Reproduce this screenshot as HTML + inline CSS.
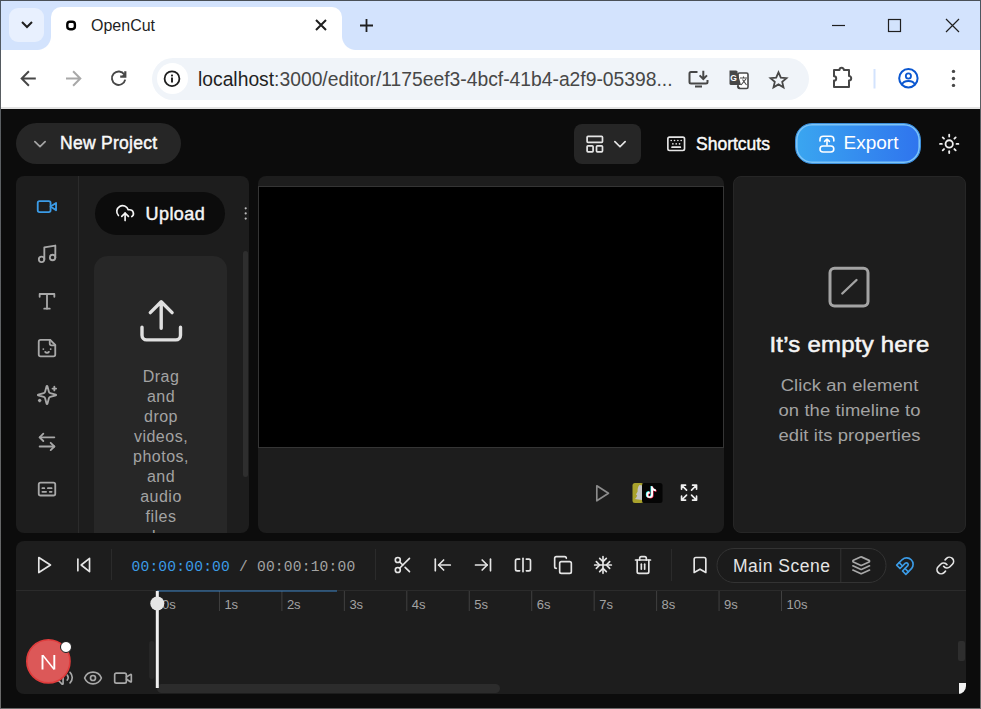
<!DOCTYPE html>
<html><head><meta charset="utf-8">
<style>
*{box-sizing:border-box;margin:0;padding:0}
html,body{width:981px;height:709px;overflow:hidden;background:#0c0c0c;font-family:"Liberation Sans",sans-serif}
.abs{position:absolute}
#win{position:absolute;left:0;top:0;width:981px;height:709px;}
#tabstrip{position:absolute;left:0;top:0;width:981px;height:50px;background:#d3e3fd}
#toolbar{position:absolute;left:0;top:50px;width:981px;height:58px;background:#fff}
#tbline{position:absolute;left:0;top:107px;width:981px;height:2px;background:#e3e3e3}
#bl{position:absolute;left:0;top:0;width:1px;height:709px;background:linear-gradient(#4b5560,#5a5e62 100px,#6a6a6a)}
#bt{position:absolute;left:0;top:0;width:981px;height:1px;background:#4a5057}
#br{position:absolute;left:980px;top:0;width:1px;height:709px;background:linear-gradient(#4b5560,#5a5e62 100px,#6a6a6a)}
#app{position:absolute;left:1px;top:109px;width:979px;height:600px;background:#0c0c0c;overflow:hidden}
svg{position:absolute;overflow:visible}
.panel{position:absolute;background:#1d1d1d;border-radius:8px}
</style></head><body>
<div id="win">
  <div id="tabstrip"></div>
  <!-- dropdown -->
  <div class="abs" style="left:9px;top:8px;width:35px;height:34px;border-radius:9px;background:#e8f0fe"></div>
  <svg style="left:0;top:0" width="981" height="50">
    <path d="M22 22 L27 27 L32 22" fill="none" stroke="#1f1f1f" stroke-width="2"/>
  </svg>
  <!-- tab -->
  <div class="abs" style="left:51px;top:7px;width:291px;height:45px;background:#fff;border-radius:10px 10px 0 0"></div>
  <div class="abs" style="left:37px;top:36px;width:14px;height:14px;background:radial-gradient(circle at 0 0,transparent 13.5px,#fff 14.5px)"></div>
  <div class="abs" style="left:342px;top:36px;width:14px;height:14px;background:radial-gradient(circle at 14px 0,transparent 13.5px,#fff 14.5px)"></div>
  <svg style="left:0;top:0" width="981" height="50">
    <rect x="67.3" y="21.8" width="7.6" height="7.4" rx="2.6" fill="none" stroke="#000" stroke-width="2.4"/>
    <path d="M316 20 L326 30 M326 20 L316 30" stroke="#1f1f1f" stroke-width="2"/>
    <path d="M360 25.5 H373 M366.5 19 V32" stroke="#1f1f1f" stroke-width="1.8"/>
    <path d="M832 25.5 H845" stroke="#1f1f1f" stroke-width="1.2"/>
    <rect x="888.5" y="19.5" width="12" height="12" fill="none" stroke="#1f1f1f" stroke-width="1.2"/>
    <path d="M946 19 L959 32 M959 19 L946 32" stroke="#1f1f1f" stroke-width="1.2"/>
  </svg>
  <div class="abs t" style="left:91px;top:16.5px;font-size:16px;letter-spacing:0px;color:#1f1f1f;line-height:18px">OpenCut</div>
  <div id="toolbar"></div>
  <div id="tbline"></div>
  <!-- address bar -->
  <div class="abs" style="left:152px;top:58px;width:657px;height:42px;border-radius:21px;background:#f0f4f9"></div>
  <div class="abs" style="left:157px;top:63px;width:31px;height:31px;border-radius:50%;background:#fff"></div>
  <div class="abs t" style="left:198px;top:68.5px;font-size:19.3px;color:#1f1f1f;line-height:22px;white-space:nowrap">localhost<span style="color:#474747">:3000/editor/1175eef3-4bcf-41b4-a2f9-05398...</span></div>
  <svg style="left:0;top:0" width="981" height="109">
    <!-- back -->
    <path d="M35.8 78.5 H22 M28.9 71.3 L21.7 78.5 L28.9 85.7" fill="none" stroke="#474747" stroke-width="2"/>
    <path d="M66 78.5 H80 M73.1 71.3 L80.3 78.5 L73.1 85.7" fill="none" stroke="#a8a8a8" stroke-width="2"/>
    <path d="M125.2 79.6 A6.7 6.7 0 1 1 124.3 74.6" fill="none" stroke="#474747" stroke-width="1.9"/>
    <path d="M120.2 76.6 H125.3 V71.2" fill="none" stroke="#474747" stroke-width="2.2" stroke-linejoin="miter"/>
    <path d="M121.5 76.6 L125.3 72.8 V76.6 Z" fill="#474747"/>
    <circle cx="172" cy="78.7" r="7.4" fill="none" stroke="#1f1f1f" stroke-width="1.8"/>
    <path d="M172 77.4 V82.6" stroke="#1f1f1f" stroke-width="1.9"/>
    <rect x="171.05" y="74.6" width="1.9" height="1.8" fill="#1f1f1f"/>
  </svg>
  <div id="bl"></div><div id="bt"></div><div id="br"></div>
  
  <svg style="left:0;top:0" width="981" height="109">
    <!-- install -->
    <path d="M697.5 72 H691 a1.5 1.5 0 0 0 -1.5 1.5 V82 a1.5 1.5 0 0 0 1.5 1.5 H706 a1.5 1.5 0 0 0 1.5 -1.5 V80" fill="none" stroke="#474747" stroke-width="2"/>
    <rect x="695" y="85.5" width="7" height="2" fill="#474747"/>
    <path d="M703.3 70.8 V79 M699.6 75.4 L703.3 79 L707 75.4" fill="none" stroke="#474747" stroke-width="2"/>
    <!-- translate -->
    <rect x="738" y="73" width="10" height="15.5" rx="1.5" fill="#fff" stroke="#474747" stroke-width="1.6"/>
    <path d="M729.5 70.5 H736 a1.5 1.5 0 0 1 1.2 .8 L741 85 H731 a1.5 1.5 0 0 1 -1.5 -1.5 Z" fill="#474747"/>
    <path d="M737.5 86 L739.5 88.5" stroke="#474747" stroke-width="2"/>
    <text x="733.5" y="81" font-family="Liberation Sans" font-weight="bold" font-size="8.5" fill="#fff" text-anchor="middle">G</text>
    <path d="M740 78 H747 M743.5 76.5 V78 M741 85 L746 79 M742.5 79.5 L746.5 85" stroke="#474747" stroke-width="1.1" fill="none"/>
    <!-- star -->
    <path d="M778.5 72.3 L780.8 77.6 L786.5 78.1 L782.2 81.9 L783.5 87.3 L778.5 84.4 L773.5 87.3 L774.8 81.9 L770.5 78.1 L776.2 77.6 Z" fill="none" stroke="#474747" stroke-width="1.8" stroke-linejoin="miter"/>
    <!-- extensions -->
    <path d="M834 70 H839.5 a2.2 2.2 0 0 1 4.4 0 H849 V76 a2.2 2.2 0 0 1 0 4.4 V87 H834 V80.6 a2.2 2.2 0 0 0 0 -4.4 Z" fill="none" stroke="#474747" stroke-width="2" stroke-linejoin="round"/>
    <rect x="873.5" y="69" width="2" height="19.5" fill="#d3e3fd"/>
    <!-- profile -->
    <circle cx="908.4" cy="78.3" r="9.2" fill="none" stroke="#0b57d0" stroke-width="2"/>
    <circle cx="908.4" cy="76" r="2.6" fill="none" stroke="#0b57d0" stroke-width="1.8"/>
    <path d="M901.8 84.8 C903 81.8 905.5 81 908.4 81 C911.3 81 913.8 81.8 915 84.8" fill="none" stroke="#0b57d0" stroke-width="1.8"/>
    <circle cx="953.5" cy="71.4" r="1.7" fill="#474747"/>
    <circle cx="953.5" cy="78.5" r="1.7" fill="#474747"/>
    <circle cx="953.5" cy="85.4" r="1.7" fill="#474747"/>
  </svg>
<div id="app"></div>
  <!-- ===== APP HEADER ===== -->
  <div class="abs" style="left:16px;top:123px;width:165px;height:41px;border-radius:20.5px;background:#262626"></div>
  <svg style="left:0;top:0" width="981" height="709">
    <g transform="translate(29.75,133.85) scale(0.8542)" fill="none" stroke="#a3a3a3" stroke-width="2" stroke-linecap="round" stroke-linejoin="round"><path d="m6 9 6 6 6-6"/></g>
    
  </svg>
  <div class="abs t" style="left:60px;top:132.5px;font-size:17.5px;font-weight:normal;-webkit-text-stroke:0.45px #fafafa;letter-spacing:0.27px;color:#fafafa;line-height:20px;white-space:nowrap">New Project</div>
  <div class="abs" style="left:574px;top:124px;width:67px;height:40px;border-radius:8px;background:#262626"></div>
  <svg style="left:0;top:0" width="981" height="709">
    <g transform="translate(584.55,133.85) scale(0.8542)" fill="none" stroke="#e5e5e5" stroke-width="2" stroke-linecap="round" stroke-linejoin="round"><rect width="18" height="7" x="3" y="3" rx="1"/><rect width="7" height="7" x="3" y="14" rx="1"/><rect width="7" height="7" x="14" y="14" rx="1"/></g>
    <g transform="translate(609.75,133.95) scale(0.8542)" fill="none" stroke="#e5e5e5" stroke-width="2" stroke-linecap="round" stroke-linejoin="round"><path d="m6 9 6 6 6-6"/></g>
    <g transform="translate(666.20,133.80) scale(0.8333)" fill="none" stroke="#e5e5e5" stroke-width="2" stroke-linecap="round" stroke-linejoin="round"><path d="M10 8h.01"/><path d="M12 12h.01"/><path d="M14 8h.01"/><path d="M16 12h.01"/><path d="M18 8h.01"/><path d="M6 8h.01"/><path d="M7 16h10"/><path d="M8 12h.01"/><rect width="20" height="16" x="2" y="4" rx="2"/></g>
    <g transform="translate(938.20,132.90) scale(0.9167)" fill="none" stroke="#f0f0f0" stroke-width="2" stroke-linecap="round" stroke-linejoin="round"><circle cx="12" cy="12" r="4"/><path d="M12 2v2"/><path d="M12 20v2"/><path d="m4.93 4.93 1.41 1.41"/><path d="m17.66 17.66 1.41 1.41"/><path d="M2 12h2"/><path d="M20 12h2"/><path d="m6.34 17.66-1.41 1.41"/><path d="m19.07 4.93-1.41 1.41"/></g>
    </svg>
  <div class="abs t" style="left:696px;top:133.5px;font-size:17.5px;font-weight:normal;-webkit-text-stroke:0.45px #fafafa;letter-spacing:0px;color:#fafafa;line-height:20px;white-space:nowrap">Shortcuts</div>
  <div class="abs" style="left:795px;top:123px;width:126px;height:41px;border-radius:17px;background:linear-gradient(90deg,#3aa6f0,#2f74ee);border:1px solid #3d8ed8;box-shadow:inset 0 0 0 1.6px #7cc4f7"></div>
  <svg style="left:0;top:0" width="981" height="709">
    <path d="M820 141 V139.5 a3.2 3.2 0 0 1 3.2 -3.2 H830.6 a3.2 3.2 0 0 1 3.2 3.2 V141" fill="none" stroke="#fff" stroke-width="1.6" stroke-linecap="round"/>
    <path d="M827 145 V139 M824.6 141.4 L827 139 L829.4 141.4" fill="none" stroke="#fff" stroke-width="1.6" stroke-linecap="round" stroke-linejoin="round"/>
    <rect x="820" y="146" width="13.8" height="6" rx="3" fill="none" stroke="#fff" stroke-width="1.6"/>
  </svg>
  <div class="abs t" style="left:843.5px;top:132.5px;font-size:19px;letter-spacing:0px;color:#fff;line-height:20px;white-space:nowrap">Export</div>

  <!-- ===== PANELS ===== -->
  <div class="panel" style="left:16px;top:176px;width:233px;height:357px;overflow:hidden">
    <div class="abs" style="left:62px;top:0;width:1px;height:357px;background:#2b2b2b"></div>
    <div class="abs" style="left:79px;top:16px;width:130px;height:43px;border-radius:21.5px;background:#0c0c0c"></div>
    <div class="abs" style="left:78px;top:80px;width:133px;height:300px;border-radius:14px;background:#272727"></div>
    <div class="abs" style="left:227px;top:75px;width:5px;height:226px;border-radius:3px;background:#2e2e2e"></div>
  </div>
  <div class="panel" style="left:258px;top:176px;width:466px;height:357px;overflow:hidden">
    <div class="abs" style="left:0;top:10px;width:466px;height:262px;background:#000;border:1px solid #353535"></div>
  </div>
  <div class="panel" style="left:733px;top:176px;width:233px;height:357px;border:1px solid #262626"></div>

  <!-- rail icons -->
  <svg style="left:0;top:0" width="981" height="709">
    <g transform="translate(35.90,195.60) scale(0.9167)" fill="none" stroke="#3b9be6" stroke-width="2" stroke-linecap="round" stroke-linejoin="round"><path d="m22 8-6 4 6 4V8Z"/><rect width="14" height="12" x="2" y="6" rx="2" ry="2"/></g>
    <g transform="translate(36.07,242.80) scale(0.9167)" fill="none" stroke="#a8a8a8" stroke-width="2" stroke-linecap="round" stroke-linejoin="round"><path d="M9 18V5l12-2v13"/><circle cx="6" cy="18" r="3"/><circle cx="18" cy="16" r="3"/></g>
    <g transform="translate(36.00,290.35) scale(0.9167)" fill="none" stroke="#a8a8a8" stroke-width="2" stroke-linecap="round" stroke-linejoin="round"><polyline points="4 7 4 4 20 4 20 7"/><line x1="9" x2="15" y1="20" y2="20"/><line x1="12" x2="12" y1="4" y2="20"/></g>
    <g transform="translate(36.00,337.20) scale(0.9167)" fill="none" stroke="#a8a8a8" stroke-width="2" stroke-linecap="round" stroke-linejoin="round"><path d="M15.5 3H5a2 2 0 0 0-2 2v14c0 1.1.9 2 2 2h14a2 2 0 0 0 2-2V8.5L15.5 3Z"/><path d="M15 3v4a2 2 0 0 0 2 2h4"/><path d="M8 13h.01"/><path d="M16 13h.01"/><path d="M10 16s.8 1 2 1c1.3 0 2-1 2-1"/></g>
    <g transform="translate(36.00,384.00) scale(0.9167)" fill="none" stroke="#a8a8a8" stroke-width="2" stroke-linecap="round" stroke-linejoin="round"><path d="M9.937 15.5A2 2 0 0 0 8.5 14.063l-6.135-1.582a.5.5 0 0 1 0-.962L8.5 9.936A2 2 0 0 0 9.937 8.5l1.582-6.135a.5.5 0 0 1 .963 0L14.063 8.5A2 2 0 0 0 15.5 9.937l6.135 1.581a.5.5 0 0 1 0 .964L15.5 14.063a2 2 0 0 0-1.437 1.437l-1.582 6.135a.5.5 0 0 1-.963 0z"/><path d="M20 3v4"/><path d="M22 5h-4"/><path d="M4 17v2"/><path d="M5 18H3"/></g>
    <g transform="translate(36.00,430.90) scale(0.9167)" fill="none" stroke="#a8a8a8" stroke-width="2" stroke-linecap="round" stroke-linejoin="round"><path d="M8 3 4 7l4 4"/><path d="M4 7h16"/><path d="m16 21 4-4-4-4"/><path d="M20 17H4"/></g>
    <g transform="translate(36.00,478.10) scale(0.9167)" fill="none" stroke="#a8a8a8" stroke-width="2" stroke-linecap="round" stroke-linejoin="round"><rect width="18" height="14" x="3" y="5" rx="2" ry="2"/><path d="M7 15h4M15 15h2M7 11h2M13 11h4"/></g>
    <!-- upload button -->
    <g transform="translate(115.1,203.1) scale(0.8333)" fill="none" stroke="#f5f5f5" stroke-width="2" stroke-linecap="round" stroke-linejoin="round"><path d="M4 14.899A7 7 0 1 1 15.71 8h1.79a4.5 4.5 0 0 1 2.5 8.242"/><path d="M12 12v9"/><path d="m16 16-4-4-4 4"/></g>
    <circle cx="245.7" cy="208.3" r="1.1" fill="#bdbdbd"/>
    <circle cx="245.7" cy="213.4" r="1.1" fill="#bdbdbd"/>
    <circle cx="245.7" cy="218.6" r="1.1" fill="#bdbdbd"/>
    <g fill="none" stroke="#e0e0e0" stroke-width="3.4" stroke-linecap="round" stroke-linejoin="round">
      <path d="M161.2 328.3 V302 M150.3 312.6 L161.2 301.8 L172.1 312.6"/>
      <path d="M142 327.3 V335.3 a4.6 4.6 0 0 0 4.6 4.6 H175.9 a4.6 4.6 0 0 0 4.6 -4.6 V327.3"/>
    </g>
  </svg>
  <div class="abs t" style="left:145.5px;top:203.5px;font-size:18px;font-weight:normal;-webkit-text-stroke:0.45px #f5f5f5;letter-spacing:0.44px;color:#f5f5f5;line-height:21px;white-space:nowrap">Upload</div>
  <div class="abs" style="left:95px;top:367px;width:131px;height:166px;overflow:hidden">
    <div class="t" style="width:131px;text-align:center;font-size:16px;line-height:20px;color:#a3a3a3;padding-left:1px;letter-spacing:0.5px">Drag<br>and<br>drop<br>videos,<br>photos,<br>and<br>audio<br>files<br>by</div>
  </div>
  <!-- preview controls -->
  <svg style="left:0;top:0" width="981" height="709">
    <g transform="translate(591.80,483.30) scale(0.8333)" fill="none" stroke="#8c8c8c" stroke-width="2" stroke-linecap="round" stroke-linejoin="round"><polygon points="6 3 20 12 6 21 6 3"/></g>
    
    <rect x="632.5" y="483" width="11" height="20" rx="2.5" fill="#a9a22c"/>
    <path d="M639.5 485 C637.8 486.5 637.5 489 637.6 491.5 L636 494.5 L637.2 495.5 C636.5 497.5 635.8 498.5 634.8 499 L642 500 L642.5 485.5 Z" fill="#c4c4c4"/>
    <rect x="642" y="483" width="20.5" height="20" rx="2.5" fill="#050505"/>
    <path d="M652.6 486.3 C652.9 488 654.1 489.3 655.9 489.5 V491.3 C654.8 491.3 653.8 490.9 653 490.3 V494.8 A3.3 3.3 0 1 1 649.7 491.5 V493.4 A1.5 1.5 0 1 0 651.1 494.8 V486.3 Z" fill="#25f4ee" transform="translate(-0.6,-0.4)"/>
    <path d="M652.6 486.3 C652.9 488 654.1 489.3 655.9 489.5 V491.3 C654.8 491.3 653.8 490.9 653 490.3 V494.8 A3.3 3.3 0 1 1 649.7 491.5 V493.4 A1.5 1.5 0 1 0 651.1 494.8 V486.3 Z" fill="#fe2c55" transform="translate(0.6,0.4)"/>
    <path d="M652.6 486.3 C652.9 488 654.1 489.3 655.9 489.5 V491.3 C654.8 491.3 653.8 490.9 653 490.3 V494.8 A3.3 3.3 0 1 1 649.7 491.5 V493.4 A1.5 1.5 0 1 0 651.1 494.8 V486.3 Z" fill="#fff"/>
    <g transform="translate(679.05,482.65) scale(0.8333)" fill="none" stroke="#f0f0f0" stroke-width="2" stroke-linecap="round" stroke-linejoin="round"><path d="m21 21-6-6m6 6v-4.8m0 4.8h-4.8"/><path d="M3 16.2V21m0 0h4.8M3 21l6-6"/><path d="M21 7.8V3m0 0h-4.8M21 3l-6 6"/><path d="M3 7.8V3m0 0h4.8M3 3l6 6"/></g>
    
    <!-- properties -->
    <rect x="830" y="268.3" width="38" height="37.8" rx="4.5" fill="none" stroke="#a3a3a3" stroke-width="3"/>
    <path d="M842.3 293.5 L856.5 280" stroke="#a3a3a3" stroke-width="2.4" stroke-linecap="round"/>
  </svg>
  <div class="abs t" style="left:733px;top:332px;width:233px;text-align:center;font-size:21.5px;font-weight:normal;-webkit-text-stroke:0.5px #f5f5f5;letter-spacing:0.2px;transform:scaleX(1.115);transform-origin:116px 0;color:#f5f5f5;line-height:26px;white-space:nowrap">It&rsquo;s empty here</div>
  <div class="abs t" style="left:733px;top:373px;width:233px;text-align:center;font-size:17.3px;letter-spacing:0.1px;transform:scaleX(1.065);transform-origin:116px 0;color:#a3a3a3;line-height:25px">Click an element<br>on the timeline to<br>edit its properties</div>

  <!-- ===== TIMELINE ===== -->
  <div class="panel" style="left:16px;top:541px;width:950px;height:153px;overflow:hidden">
    <div class="abs" style="left:0;top:49px;width:950px;height:1px;background:#2b2b2b"></div>
    <div class="abs" style="left:141px;top:143px;width:343px;height:9px;border-radius:4.5px;background:#2c2c2c"></div><div class="abs" style="left:942.5px;top:142px;width:8px;height:11px;background:#f2f2f2"></div>
  </div>
  <div class="abs t" style="left:131.5px;top:557.5px;font-family:'Liberation Mono',monospace;font-size:14.6px;letter-spacing:0.2px;line-height:18px;color:#a3a3a3;white-space:nowrap"><span style="color:#3b9be6">00:00:00:00</span> / 00:00:10:00</div>
  <div class="abs t" style="left:162.0px;top:597px;font-size:13px;color:#a3a3a3;line-height:15px">0s</div><div class="abs t" style="left:224.4px;top:597px;font-size:13px;color:#a3a3a3;line-height:15px">1s</div><div class="abs t" style="left:286.9px;top:597px;font-size:13px;color:#a3a3a3;line-height:15px">2s</div><div class="abs t" style="left:349.4px;top:597px;font-size:13px;color:#a3a3a3;line-height:15px">3s</div><div class="abs t" style="left:411.8px;top:597px;font-size:13px;color:#a3a3a3;line-height:15px">4s</div><div class="abs t" style="left:474.2px;top:597px;font-size:13px;color:#a3a3a3;line-height:15px">5s</div><div class="abs t" style="left:536.7px;top:597px;font-size:13px;color:#a3a3a3;line-height:15px">6s</div><div class="abs t" style="left:599.2px;top:597px;font-size:13px;color:#a3a3a3;line-height:15px">7s</div><div class="abs t" style="left:661.6px;top:597px;font-size:13px;color:#a3a3a3;line-height:15px">8s</div><div class="abs t" style="left:724.1px;top:597px;font-size:13px;color:#a3a3a3;line-height:15px">9s</div><div class="abs t" style="left:786.5px;top:597px;font-size:13px;color:#a3a3a3;line-height:15px">10s</div>
  <svg style="left:0;top:0" width="981" height="709">
    <rect x="218.95" y="591" width="1" height="20" fill="#404040"/><rect x="281.40" y="591" width="1" height="20" fill="#404040"/><rect x="343.85" y="591" width="1" height="20" fill="#404040"/><rect x="406.30" y="591" width="1" height="20" fill="#404040"/><rect x="468.75" y="591" width="1" height="20" fill="#404040"/><rect x="531.20" y="591" width="1" height="20" fill="#404040"/><rect x="593.65" y="591" width="1" height="20" fill="#404040"/><rect x="656.10" y="591" width="1" height="20" fill="#404040"/><rect x="718.55" y="591" width="1" height="20" fill="#404040"/><rect x="781.00" y="591" width="1" height="20" fill="#404040"/>
    <rect x="157" y="590.5" width="180" height="1" fill="#3b82c4"/>
    <rect x="111" y="549" width="1" height="31" fill="#2b2b2b"/>
    <rect x="375" y="549" width="1" height="31" fill="#2b2b2b"/>
    <rect x="671" y="549" width="1" height="32" fill="#2b2b2b"/>
    <g transform="translate(33.80,555.00) scale(0.8333)" fill="none" stroke="#e5e5e5" stroke-width="2" stroke-linecap="round" stroke-linejoin="round"><polygon points="6 3 20 12 6 21 6 3"/></g>
    <g transform="translate(73.70,555.00) scale(0.8333)" fill="none" stroke="#e5e5e5" stroke-width="2" stroke-linecap="round" stroke-linejoin="round"><polygon points="19 20 9 12 19 4 19 20"/><line x1="5" x2="5" y1="19" y2="5"/></g>
    <g transform="translate(392.80,555.00) scale(0.8333)" fill="none" stroke="#e5e5e5" stroke-width="2" stroke-linecap="round" stroke-linejoin="round"><circle cx="6" cy="6" r="3"/><path d="M8.12 8.12 12 12"/><path d="M20 4 8.12 15.88"/><circle cx="6" cy="18" r="3"/><path d="M14.8 14.8 20 20"/></g>
    <g transform="translate(432.80,555.00) scale(0.8333)" fill="none" stroke="#e5e5e5" stroke-width="2" stroke-linecap="round" stroke-linejoin="round"><path d="M3 19V5"/><path d="m13 6-6 6 6 6"/><path d="M7 12h14"/></g>
    <g transform="translate(473.00,555.00) scale(0.8333)" fill="none" stroke="#e5e5e5" stroke-width="2" stroke-linecap="round" stroke-linejoin="round"><path d="M17 12H3"/><path d="m11 18 6-6-6-6"/><path d="M21 5v14"/></g>
    <g transform="translate(513.00,555.00) scale(0.8333)" fill="none" stroke="#e5e5e5" stroke-width="2" stroke-linecap="round" stroke-linejoin="round"><path d="M8 19H5c-1.1 0-2-.9-2-2V7c0-1.1.9-2 2-2h3"/><path d="M16 5h3c1.1 0 2 .9 2 2v10c0 1.1-.9 2-2 2h-3"/><line x1="12" x2="12" y1="4" y2="20"/></g>
    <g transform="translate(553.00,555.00) scale(0.8333)" fill="none" stroke="#e5e5e5" stroke-width="2" stroke-linecap="round" stroke-linejoin="round"><rect width="14" height="14" x="8" y="8" rx="2" ry="2"/><path d="M4 16c-1.1 0-2-.9-2-2V4c0-1.1.9-2 2-2h10c1.1 0 2 .9 2 2"/></g>
    <g transform="translate(593.00,555.00) scale(0.8333)" fill="none" stroke="#e5e5e5" stroke-width="2" stroke-linecap="round" stroke-linejoin="round"><line x1="2" x2="22" y1="12" y2="12"/><line x1="12" x2="12" y1="2" y2="22"/><path d="m20 16-4-4 4-4"/><path d="m4 8 4 4-4 4"/><path d="m16 4-4 4-4-4"/><path d="m8 20 4-4 4 4"/></g>
    <g transform="translate(633.00,555.00) scale(0.8333)" fill="none" stroke="#e5e5e5" stroke-width="2" stroke-linecap="round" stroke-linejoin="round"><path d="M3 6h18"/><path d="M19 6v14c0 1-1 2-2 2H7c-1 0-2-1-2-2V6"/><path d="M8 6V4c0-1 1-2 2-2h4c1 0 2 1 2 2v2"/><line x1="10" x2="10" y1="11" y2="17"/><line x1="14" x2="14" y1="11" y2="17"/></g>
    <g transform="translate(690.00,555.00) scale(0.8333)" fill="none" stroke="#e5e5e5" stroke-width="2" stroke-linecap="round" stroke-linejoin="round"><path d="m19 21-7-4-7 4V5a2 2 0 0 1 2-2h10a2 2 0 0 1 2 2v16z"/></g>
    <!-- scene pill -->
    <rect x="717" y="548.5" width="169" height="34" rx="17" fill="#1b1b1b" stroke="#333" stroke-width="1"/>
    <rect x="840.3" y="549" width="1" height="33" fill="#333"/>
    <g transform="translate(851.20,555.30) scale(0.8333)" fill="none" stroke="#a8a8a8" stroke-width="2" stroke-linecap="round" stroke-linejoin="round"><path d="m12.83 2.18a2 2 0 0 0-1.66 0L2.6 6.08a1 1 0 0 0 0 1.83l8.58 3.91a2 2 0 0 0 1.66 0l8.58-3.9a1 1 0 0 0 0-1.83Z"/><path d="m22 17.65-9.17 4.16a2 2 0 0 1-1.66 0L2 17.65"/><path d="m22 12.65-9.17 4.16a2 2 0 0 1-1.66 0L2 12.65"/></g>
    <g transform="translate(895.00,556.00) scale(0.8333)" fill="none" stroke="#3b9be6" stroke-width="2" stroke-linecap="round" stroke-linejoin="round"><path d="m6 15-4-4 6.75-6.77a7.79 7.79 0 0 1 11 11L13 22l-4-4 6.39-6.36a2.14 2.14 0 0 0-3-3L6 15"/><path d="m5 8 4 4"/><path d="m12 15 4 4"/></g>
    <g transform="translate(935.30,555.50) scale(0.8333)" fill="none" stroke="#e5e5e5" stroke-width="2" stroke-linecap="round" stroke-linejoin="round"><path d="M10 13a5 5 0 0 0 7.54.54l3-3a5 5 0 0 0-7.07-7.07l-1.72 1.71"/><path d="M14 11a5 5 0 0 0-7.54-.54l-3 3a5 5 0 0 0 7.07 7.07l1.71-1.71"/></g>
    <!-- scrollbars -->
    <rect x="149" y="641" width="5.5" height="38" rx="2.7" fill="#262626"/>
    <rect x="958" y="641" width="7" height="20" rx="2" fill="#2e2e2e"/>
    
    <!-- track header icons -->
    <g transform="translate(53.90,667.60) scale(0.8333)" fill="none" stroke="#a8a8a8" stroke-width="2" stroke-linecap="round" stroke-linejoin="round"><path d="M11 4.702a.705.705 0 0 0-1.203-.498L6.413 7.587A1.4 1.4 0 0 1 5.416 8H3a1 1 0 0 0-1 1v6a1 1 0 0 0 1 1h2.416a1.4 1.4 0 0 1 .997.413l3.383 3.384A.705.705 0 0 0 11 19.298z"/><path d="M16 9a5 5 0 0 1 0 6"/><path d="M19.364 18.364a9 9 0 0 0 0-12.728"/></g>
    <g transform="translate(83.00,668.00) scale(0.8333)" fill="none" stroke="#a8a8a8" stroke-width="2" stroke-linecap="round" stroke-linejoin="round"><path d="M2.062 12.348a1 1 0 0 1 0-.696 10.75 10.75 0 0 1 19.876 0 1 1 0 0 1 0 .696 10.75 10.75 0 0 1-19.876 0"/><circle cx="12" cy="12" r="3"/></g>
    <g transform="translate(113.00,668.20) scale(0.8333)" fill="none" stroke="#a8a8a8" stroke-width="2" stroke-linecap="round" stroke-linejoin="round"><path d="m16 13 5.223 3.482a.5.5 0 0 0 .777-.416V7.87a.5.5 0 0 0-.752-.432L16 10.5"/><rect x="2" y="6" width="14" height="12" rx="2"/></g>
    <!-- playhead -->
    <rect x="155.8" y="591" width="3" height="97" fill="#f0f0f0"/>
    <circle cx="157.3" cy="603.5" r="7" fill="#e5e5e5"/>
    <!-- avatar -->
    <circle cx="48.4" cy="661.3" r="21.6" fill="#dc5858" stroke="#e03c3c" stroke-width="1.6"/>
    <path d="M42.5 669.5 V655 M54.3 655 V669.5" fill="none" stroke="#fff" stroke-width="1.9"/>
    <path d="M42.8 655.2 L54 669.3" fill="none" stroke="#fff" stroke-width="1.5"/>
    <circle cx="66" cy="647" r="5.5" fill="#fff" stroke="#1c1c1c" stroke-width="1"/>
  </svg>
  <div class="abs t" style="left:733px;top:556px;font-size:17.5px;letter-spacing:0.5px;color:#e5e5e5;line-height:20px;white-space:nowrap">Main Scene</div>
  <!-- window bottom/left border -->
  <div class="abs" style="left:0;top:708px;width:981px;height:1px;background:#6a6a6a"></div>

</div>
</body></html>
